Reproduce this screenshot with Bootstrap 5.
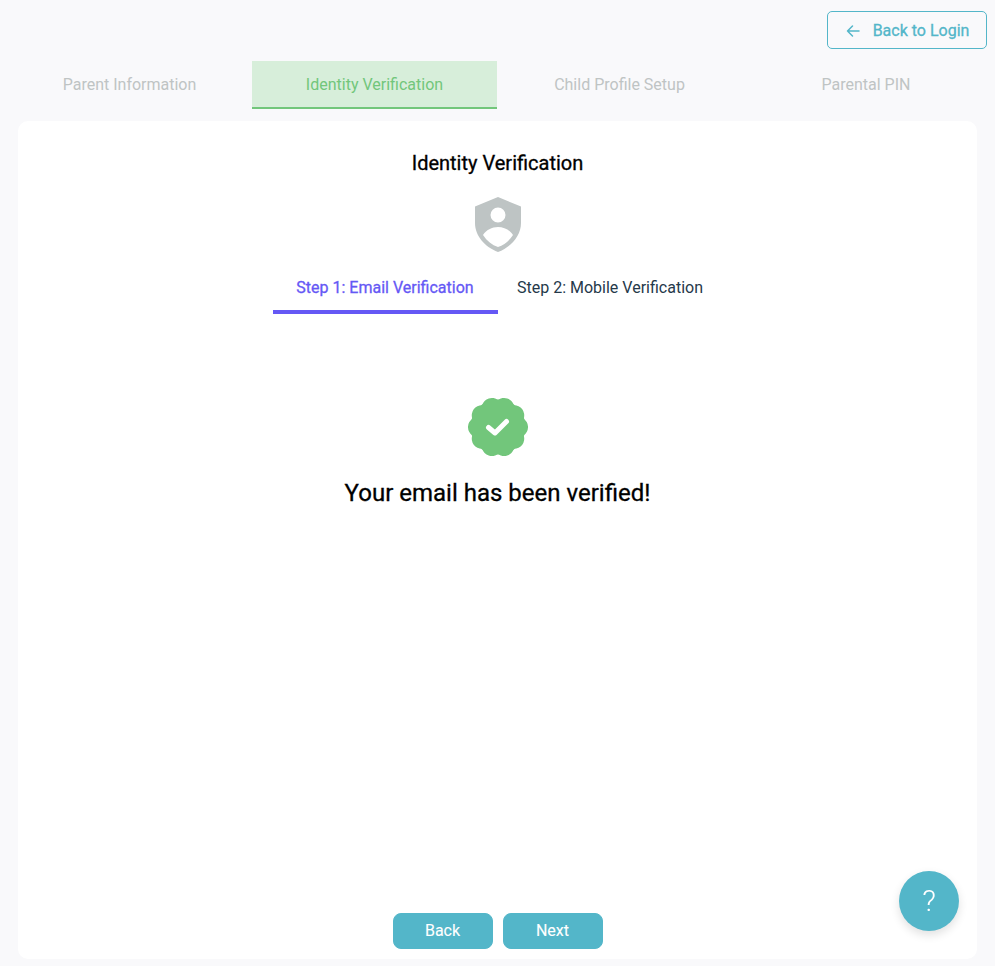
<!DOCTYPE html>
<html lang="en">
<head>
    <meta charset="UTF-8">
    <meta name="viewport" content="width=device-width, initial-scale=1.0">
    <title>Identity Verification</title>
    <link href="https://cdn.jsdelivr.net/npm/bootstrap@5.3.0/dist/css/bootstrap.min.css" rel="stylesheet">
    <style>
        html, body {
            height: 100%;
        }
        body {
            background-color: #f9f9fb;
            font-family: Roboto, sans-serif;
            overflow: hidden;
        }
        .page-shell {
            height: 966px;
            padding: 11px 8px 7px 7px;
        }
        /* installed Roboto has no in-between weight, this gives the slightly heavier look */
        .text-semi {
            -webkit-text-stroke: 0.3px currentColor;
        }
        .btn-login {
            width: 160px;
            height: 38px;
            border: 1px solid #53b6c9;
            border-radius: 5px;
            color: #53b6c9;
            font-size: 16px;
            padding: 1px 0 0 1px;
        }
        .btn-login svg {
            margin-right: 13px;
        }
        .signup-tabs {
            margin-top: 12px;
            height: 48px;
        }
        .signup-tab {
            flex: 0 0 25%;
            color: #bfc4c4;
            font-size: 16px;
            border-bottom: 2px solid transparent;
            padding-top: 1px;
        }
        .signup-tab:last-child {
            padding-left: 3px;
        }
        .signup-tab.is-active {
            background-color: #d7eeda;
            color: #72c67b;
            border-bottom-color: #72c67b;
        }
        .main-panel {
            background: #fff;
            border-radius: 10px;
            margin: 12px 10px 0 11px;
            height: 838px;
            padding: 28px 0 10px;
        }
        .panel-title {
            font-size: 20px;
            font-weight: 400;
            line-height: 28px;
            color: #000;
            margin: 0 0 20px;
        }
        .step-tab {
            width: 225px;
            height: 45px;
            color: #25394a;
            font-size: 16px;
            border-bottom: 4px solid transparent;
            padding-bottom: 3px;
        }
        .step-tab.is-active {
            color: #6558f5;
            border-bottom-color: #6558f5;
        }
        .step-row {
            margin-top: 17px;
        }
        .verified-block {
            margin-top: 83px;
        }
        .verified-text {
            font-size: 24px;
            line-height: 32px;
            color: #000;
            margin: 20px 0 0;
        }
        .step-actions {
            gap: 10px;
        }
        .btn-step {
            width: 100px;
            height: 36px;
            background-color: #53b6c9;
            border: 1px solid #53b6c9;
            border-radius: 8px;
            color: #fff;
            font-size: 16px;
            padding: 0;
            -webkit-text-stroke: 0.1px currentColor;
        }
        .btn-help {
            position: fixed;
            left: 899px;
            top: 871px;
            width: 60px;
            height: 60px;
            border-radius: 50%;
            border: 0;
            background-color: #53b6c9;
            color: #fff;
            font-size: 30px;
            font-weight: 300;
            line-height: 60px;
            padding: 0;
            box-shadow: 0 4px 10px rgba(0, 0, 0, 0.12);
        }
    </style>
</head>
<body>
    <div class="page-shell d-flex flex-column">
        <div class="d-flex justify-content-end">
            <button type="button" class="btn btn-login text-semi d-flex align-items-center justify-content-center">
                <svg width="14" height="14" viewBox="0 0 14 14" fill="none" stroke="#53b6c9" stroke-width="1.5" stroke-linecap="round" stroke-linejoin="round"><path d="M13 7H1.500M6.500 2 1.500 7l5 5"/></svg>
                Back to Login
            </button>
        </div>

        <!-- Signup progress tabs -->
        <div class="signup-tabs d-flex">
            <div class="signup-tab d-flex align-items-center justify-content-center">Parent Information</div>
            <div class="signup-tab is-active d-flex align-items-center justify-content-center">Identity Verification</div>
            <div class="signup-tab d-flex align-items-center justify-content-center">Child Profile Setup</div>
            <div class="signup-tab d-flex align-items-center justify-content-center">Parental PIN</div>
        </div>

        <div class="main-panel d-flex flex-column align-items-center">
            <h1 class="panel-title text-semi">Identity Verification</h1>
            <svg width="46" height="55" viewBox="0 0 46 55" class="flex-shrink-0">
                <path fill="#bec4c4" fill-rule="evenodd" d="M23 0 46 9.500V26C46 39 36 50 23 55 10 50 0 39 0 26V9.500ZM23 10.500A7.500 7.500 0 1 0 23 25.500 7.500 7.500 0 1 0 23 10.500ZM8 38C11 33 17 30 23 30 29 30 35 33 38 38 34 44 29 48 23 50 17 48 12 44 8 38Z"/>
            </svg>

            <div class="step-row d-flex">
                <div class="step-tab is-active text-semi d-flex align-items-center justify-content-center">Step 1: Email Verification</div>
                <div class="step-tab d-flex align-items-center justify-content-center">Step 2: Mobile Verification</div>
            </div>

            <div class="verified-block d-flex flex-column align-items-center">
                <svg width="60" height="60" viewBox="0 0 60 60">
                    <circle cx="30" cy="30" r="27.600" fill="#72c67b"/>
                    <path fill="#72c67b" d="M30 3A10.200 10.200 0 0 1 45.880 8.160 10.200 10.200 0 0 1 55.680 21.660 10.200 10.200 0 0 1 55.680 38.340 10.200 10.200 0 0 1 45.880 51.840 10.200 10.200 0 0 1 30 57 10.200 10.200 0 0 1 14.120 51.840 10.200 10.200 0 0 1 4.320 38.340 10.200 10.200 0 0 1 4.320 21.660 10.200 10.200 0 0 1 14.120 8.160 10.200 10.200 0 0 1 30 3Z"/>
                    <path fill="none" stroke="#fff" stroke-width="5" stroke-linecap="round" stroke-linejoin="round" d="M20.500 30.500 27 36 38.500 24.500"/>
                </svg>
                <p class="verified-text text-semi">Your email has been verified!</p>
            </div>

            <div class="step-actions d-flex mt-auto">
                <button type="button" class="btn btn-step">Back</button>
                <button type="button" class="btn btn-step">Next</button>
            </div>
        </div>
    </div>

    <button type="button" class="btn-help">?</button>

    <script src="https://cdn.jsdelivr.net/npm/bootstrap@5.3.0/dist/js/bootstrap.bundle.min.js"></script>
</body>
</html>
